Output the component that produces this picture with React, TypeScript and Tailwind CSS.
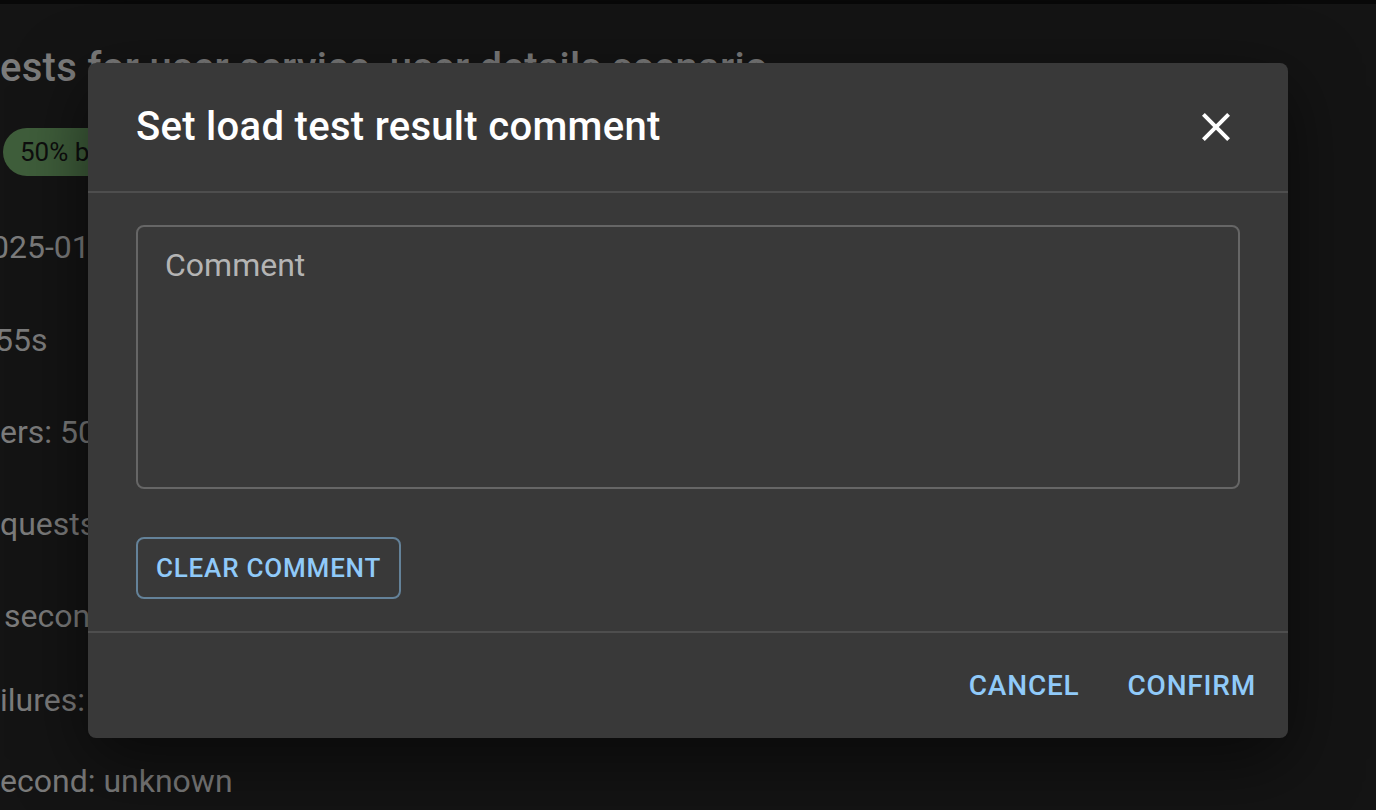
import React from 'react';

const lines = [
  { text: '2025-01-14 10:32:11', cls: 'mt-[47px] -ml-[27px]' },
  { text: '55s', cls: 'mt-[45px] -ml-[5px]' },
  { text: 'ers: 50', cls: 'mt-[44px]' },
  { text: 'quests: 12840', cls: 'mt-[44px]' },
  { text: 'second: 111.6', cls: 'mt-[44px] ml-[4px]' },
  { text: 'ilures: 0', cls: 'mt-[36px]' },
  { text: 'econd: unknown', cls: 'mt-[33px]' },
];

function CloseIcon() {
  return (
    <svg viewBox="0 0 24 24" width={48} height={48} fill="#ffffff">
      <path d="M19 6.41 17.59 5 12 10.59 6.41 5 5 6.41 10.59 12 5 17.59 6.41 19 12 13.41 17.59 19 19 17.59 13.41 12z" />
    </svg>
  );
}

export default function App() {
  return (
    <div className="relative h-[810px] w-full overflow-hidden bg-[#141414] font-['Roboto',sans-serif]">
      <div className="h-[4px] bg-[#080808]" />

      {/* page behind the backdrop */}
      <div className="flex flex-col items-start text-[#7b7b7b]">
        <div className="mt-[40px] text-[40px] leading-[48px] font-medium tracking-[0.3px] whitespace-nowrap">
          ests for user service, user details scenario
        </div>
        <div className="mt-[36px] ml-[3px] h-[48px] flex items-center rounded-full bg-[#3f5e3b] pl-[17px] pr-[24px] text-[26px] text-[#0e0e0e] whitespace-nowrap">
          50% better than baseline
        </div>
        {lines.map((l, i) => (
          <div key={i} className={`text-[32px] leading-[48px] whitespace-nowrap ${l.cls}`}>
            {l.text}
          </div>
        ))}
      </div>

      {/* dialog */}
      <div className="absolute left-[88px] top-[63px] w-[1200px] rounded-[8px] bg-[#393939] shadow-[0_22px_70px_rgba(0,0,0,0.55)] flex flex-col">
        <div className="px-[48px] py-[32px] text-[40px] leading-[64px] font-medium tracking-[0.3px] text-white">
          Set load test result comment
        </div>
        <button className="absolute right-[48px] top-[40px] flex items-center justify-center">
          <CloseIcon />
        </button>

        <div className="border-y-2 border-[#4e4e4e] px-[48px] pt-[32px] pb-[32px] flex flex-col items-start">
          <textarea
            placeholder="Comment"
            className="w-full h-[264px] resize-none rounded-[8px] border-2 border-[#666666] bg-transparent pt-[15px] px-[27px] text-[32px] leading-[46px] text-white placeholder:text-[#b4b4b4] outline-none"
          />
          <button className="mt-[48px] h-[62px] rounded-[8px] border-2 border-[#648299] px-[18px] text-[26px] font-medium uppercase tracking-[0.8px] text-[#90caf9]">
            Clear comment
          </button>
        </div>

        <div className="flex justify-end gap-[16px] p-[16px]">
          <button className="h-[73px] px-[16px] text-[28px] font-medium uppercase tracking-[0.8px] text-[#90caf9]">
            Cancel
          </button>
          <button className="h-[73px] px-[16px] text-[28px] font-medium uppercase tracking-[0.8px] text-[#90caf9]">
            Confirm
          </button>
        </div>
      </div>
    </div>
  );
}
